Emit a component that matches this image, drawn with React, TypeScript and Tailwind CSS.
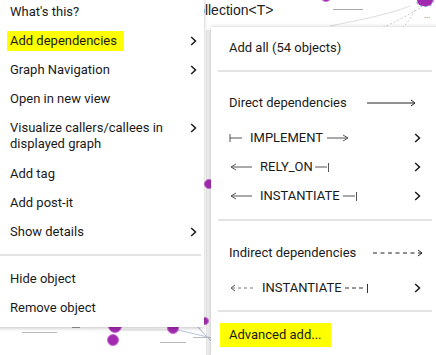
import React from "react";

const Chevron = () => (
  <svg width="7" height="10" viewBox="0 0 7 10" className="shrink-0">
    <path d="M1.2 1l4.3 4-4.3 4" fill="none" stroke="#1a1a1a" strokeWidth="1.5" />
  </svg>
);

const LongArrow = ({ w = 50, dashed = false }: { w?: number; dashed?: boolean }) => (
  <svg width={w} height="8" viewBox={`0 0 ${w} 8`} className="shrink-0">
    <line x1="0" y1="4" x2={w - 1} y2="4" stroke="#222" strokeWidth="1" strokeDasharray={dashed ? "4 3.5" : undefined} />
    <path d={`M${w - 5} 1L${w - 1} 4L${w - 5} 7`} fill="none" stroke="#222" strokeWidth="1" />
  </svg>
);

const StartBar = () => (
  <svg width="13" height="10" viewBox="0 0 13 10" className="shrink-0">
    <line x1="1" y1="1" x2="1" y2="9" stroke="#555" strokeWidth="1" />
    <line x1="1" y1="5" x2="13" y2="5" stroke="#555" strokeWidth="1" />
  </svg>
);

const ShortRight = () => (
  <svg width="22" height="8" viewBox="0 0 22 8" className="shrink-0">
    <line x1="0" y1="4" x2="21" y2="4" stroke="#555" strokeWidth="1" />
    <path d="M16 1L21 4L16 7" fill="none" stroke="#555" strokeWidth="1" />
  </svg>
);

const ShortLeft = () => (
  <svg width="22" height="8" viewBox="0 0 22 8" className="shrink-0">
    <line x1="1" y1="4" x2="22" y2="4" stroke="#555" strokeWidth="1" />
    <path d="M6 1L1 4L6 7" fill="none" stroke="#555" strokeWidth="1" />
  </svg>
);

const EndBar = () => (
  <svg width="15" height="10" viewBox="0 0 15 10" className="shrink-0">
    <line x1="0" y1="5" x2="12" y2="5" stroke="#555" strokeWidth="1" />
    <line x1="13.5" y1="1" x2="13.5" y2="10" stroke="#555" strokeWidth="1" />
  </svg>
);

const DashLeft = () => (
  <svg width="24" height="8" viewBox="0 0 24 8" className="shrink-0">
    <path d="M5 1L1 4L5 7" fill="none" stroke="#555" strokeWidth="1" />
    <line x1="2" y1="4" x2="24" y2="4" stroke="#777" strokeWidth="1" strokeDasharray="3 3" />
  </svg>
);

const DashEnd = () => (
  <svg width="24" height="10" viewBox="0 0 24 10" className="shrink-0">
    <line x1="0" y1="5" x2="21" y2="5" stroke="#333" strokeWidth="1" strokeDasharray="4 3" />
    <line x1="22.5" y1="1" x2="22.5" y2="10" stroke="#333" strokeWidth="1" />
  </svg>
);

const leftItems: { label: string; sub?: boolean; two?: boolean; hl?: boolean }[] = [
  { label: "What's this?" },
  { label: "Add dependencies", sub: true, hl: true },
  { label: "Graph Navigation", sub: true },
  { label: "Open in new view" },
  { label: "Visualize callers/callees in displayed graph", sub: true, two: true },
  { label: "Add tag" },
  { label: "Add post-it" },
  { label: "Show details", sub: true },
];

function Node({ x, y, r }: { x: number; y: number; r: number }) {
  return (
    <div
      className="absolute rounded-full bg-[#a22ab0] border border-[#c66fd1]"
      style={{ left: x - r, top: y - r, width: r * 2, height: r * 2 }}
    />
  );
}

export default function App() {
  return (
    <div className="relative w-[436px] h-[355px] overflow-hidden bg-white font-['Roboto',sans-serif] text-[13px] leading-[16px] text-[#1a1a1a]">
      {/* graph behind the menus */}
      <div className="absolute left-[206px] top-[30px] w-[5px] h-[325px] bg-[#efefef] border-l border-[#e2e2e2]" />
      <svg className="absolute left-0 top-0" width="436" height="355">
        <path d="M420 8 C400 20 380 30 360 36" stroke="#ccc" fill="none" strokeDasharray="2 2" />
        <path d="M415 10 C410 20 405 26 400 30" stroke="#ccc" fill="none" strokeDasharray="2 2" />
        <path d="M330 26 C360 20 390 14 410 6" stroke="#ddd" fill="none" />
        <path d="M190 318 C200 330 210 340 220 350" stroke="#aac" fill="none" />
        <line x1="120" y1="330" x2="170" y2="330" stroke="#ddd" />
        <line x1="178" y1="330" x2="212" y2="338" stroke="#b9c7e0" />
      </svg>
      <div className="absolute left-[187px] top-[1px] text-[14px] leading-[18px] text-[#222] font-['Liberation_Sans',Arial,sans-serif]">
        Collection&lt;T&gt;
      </div>
      <Node x={326} y={-4} r={6} />
      <div className="absolute left-[417px] top-[-6px] w-[16px] h-[12px] rounded-full bg-[#a22ab0] outline-1 outline-dashed outline-[#8aa0d0]" />
      <div className="absolute left-[333px] top-[9px] w-[30px] h-[1px] bg-[#aaa]" />
      <div className="absolute left-[424px] top-[12px] text-[8px] leading-[8px] text-[#666]">...</div>
      <Node x={209} y={184} r={5} />
      <Node x={115} y={326} r={7} />
      <Node x={113} y={340} r={6} />
      <Node x={173} y={328} r={6} />
      <Node x={205} y={321} r={4} />
      <div className="absolute left-[22px] top-[332px] w-[35px] h-[1px] bg-[#bbb]" />
      <div className="absolute left-[72px] top-[327px] w-[8px] h-[1px] bg-[#999]" />
      <div className="absolute left-[160px] top-[342px] w-[26px] h-[1px] bg-[#bbb]" />
      <div className="absolute left-[193px] top-[337px] w-[18px] h-[1px] bg-[#bbb]" />

      {/* left context menu */}
      <div className="absolute left-[-6px] top-[-3px] w-[210px] bg-white pb-[5px] shadow-[0_1px_4px_rgba(0,0,0,0.25)]">
        {leftItems.map((it, i) => (
          <div
            key={i}
            className={`flex justify-between pl-[13px] pr-[7px] ${it.two ? "py-[7px] items-start" : "h-[29px] items-center"}`}
          >
            {it.hl ? (
              <span className="bg-[#ffff00] pl-[3px] pr-[7px] h-[20px] leading-[20px]">{it.label}</span>
            ) : (
              <span className={`pl-[3px] ${it.two ? "w-[175px]" : ""}`}>{it.label}</span>
            )}
            {it.sub && (
              <span className={it.two ? "pt-[3px]" : ""}>
                <Chevron />
              </span>
            )}
          </div>
        ))}
        <div className="my-[8px] mr-[3px] h-[2px] bg-[#e3e3e3]" />
        <div className="h-[29px] flex items-center pl-[16px]">Hide object</div>
        <div className="h-[29px] flex items-center pl-[16px]">Remove object</div>
      </div>

      {/* submenu */}
      <div className="absolute left-[211px] top-[27px] w-[230px] h-[340px] bg-white pt-[6px] shadow-[0_0_4px_rgba(0,0,0,0.22)]">
        <div className="h-[29px] flex items-center pl-[18px]">Add all (54 objects)</div>
        <div className="mt-[8px] ml-[7px] mr-[9px] h-[2px] bg-[#e3e3e3]" />

        <div className="mt-[16px] h-[29px] flex items-center pl-[18px] pr-[25px] justify-between">
          <span>Direct dependencies</span>
          <LongArrow w={49} />
        </div>
        <div className="mt-[6px] h-[29px] flex items-center pl-[18px] pr-[20px]">
          <StartBar />
          <span className="ml-[8px]">IMPLEMENT</span>
          <span className="ml-[4px]"><ShortRight /></span>
          <span className="ml-auto"><Chevron /></span>
        </div>
        <div className="h-[29px] flex items-center pl-[19px] pr-[20px]">
          <ShortLeft />
          <span className="ml-[8px]">RELY_ON</span>
          <span className="ml-[2px]"><EndBar /></span>
          <span className="ml-auto"><Chevron /></span>
        </div>
        <div className="h-[29px] flex items-center pl-[19px] pr-[20px]">
          <ShortLeft />
          <span className="ml-[8px]">INSTANTIATE</span>
          <span className="ml-[3px]"><EndBar /></span>
          <span className="ml-auto"><Chevron /></span>
        </div>
        <div className="mt-[9px] ml-[7px] mr-[9px] h-[2px] bg-[#e3e3e3]" />

        <div className="mt-[17px] h-[29px] flex items-center pl-[18px] pr-[18px] justify-between">
          <span>Indirect dependencies</span>
          <LongArrow w={50} dashed />
        </div>
        <div className="mt-[6px] h-[29px] flex items-center pl-[19px] pr-[20px]">
          <DashLeft />
          <span className="ml-[8px]">INSTANTIATE</span>
          <span className="ml-[3px]"><DashEnd /></span>
          <span className="ml-auto"><Chevron /></span>
        </div>
        <div className="mt-[8px] ml-[7px] mr-[9px] h-[2px] bg-[#e3e3e3]" />

        <div className="mt-[11px] pl-[9px]">
          <span className="inline-block bg-[#ffff00] pl-[9px] pr-[9px] h-[24px] leading-[24px]">Advanced add...</span>
        </div>
      </div>
    </div>
  );
}
